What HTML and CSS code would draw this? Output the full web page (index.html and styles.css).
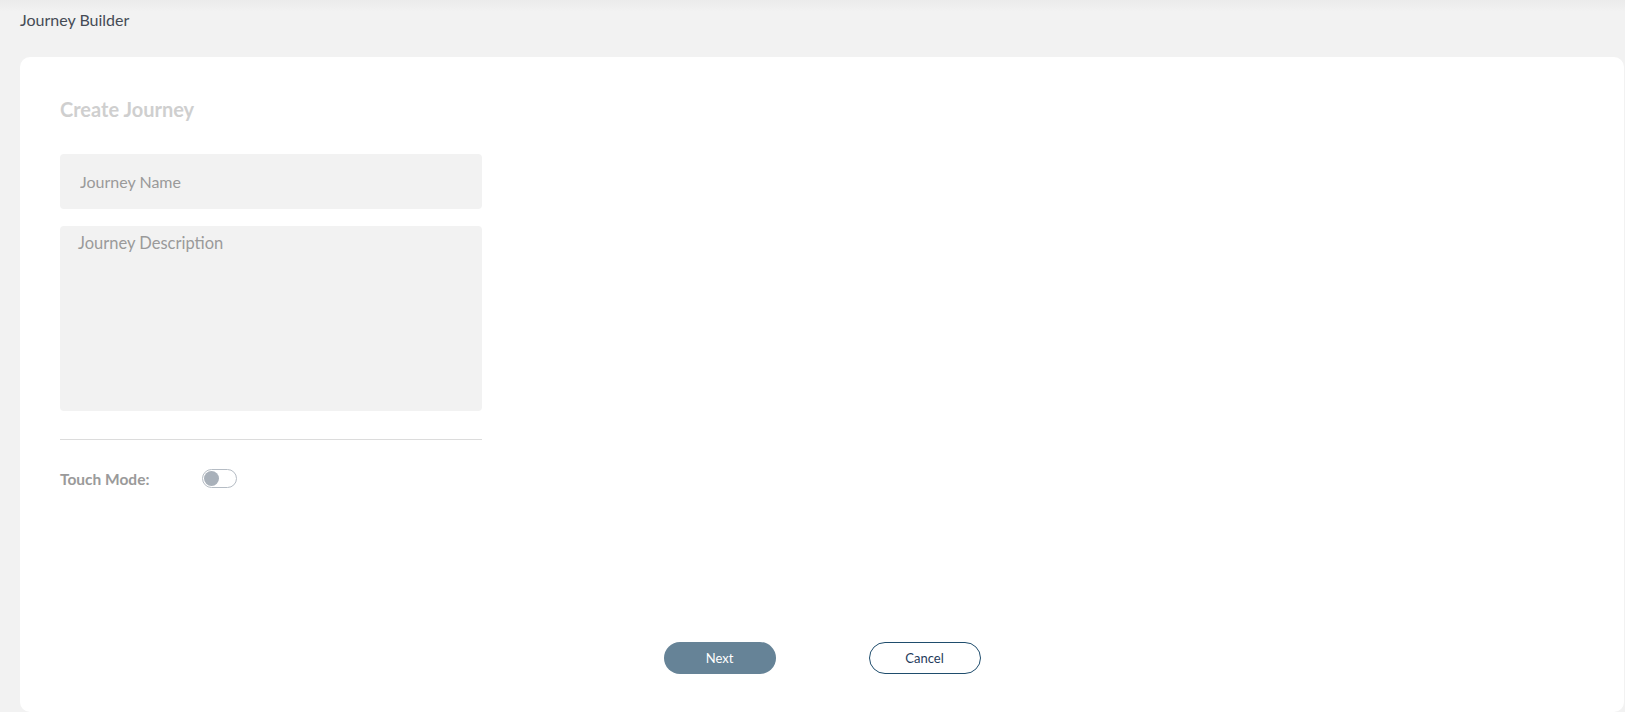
FILE: index.html
```html
<!DOCTYPE html>
<html lang="en">
<head>
  <meta charset="UTF-8" />
  <meta name="viewport" content="width=device-width, initial-scale=1.0"/>
  <title>Journey Builder</title>
  <link rel="stylesheet" href="styles.css">
</head>
<body>

  <header class="top-bar">
    <span class="page-title">Journey Builder</span>
  </header>

  <main class="card">
    <h2 class="card-title">Create Journey</h2>

    <form class="journey-form" onsubmit="event.preventDefault()">
      <input type="text" class="field" placeholder="Journey Name" />
      <textarea class="field field-area" placeholder="Journey Description"></textarea>

      <hr class="divider" />

      <div class="touch-row">
        <label class="touch-label" for="touch-mode">Touch Mode:</label>
        <label class="switch">
          <input type="checkbox" id="touch-mode" />
          <span class="knob"></span>
        </label>
      </div>
    </form>

    <div class="actions">
      <button type="button" class="btn btn-next">Next</button>
      <button type="button" class="btn btn-cancel">Cancel</button>
    </div>
  </main>

</body>
</html>
```

FILE: styles.css
```css
html, body {
  height: 100%;
}

body {
  font-family: Lato, "Open Sans", Arial, sans-serif;
  margin: 0;
  padding: 0;
  background: linear-gradient(to bottom, #ebebeb 0, #f2f2f2 12px, #f2f2f2 100%);
  display: flex;
  flex-direction: column;
  overflow: hidden;
}

.top-bar {
  height: 57px;
  box-sizing: border-box;
  padding: 10px 20px 0;
}

.page-title {
  font-size: 16px;
  font-weight: normal;
  color: #454b55;
}

.card {
  flex: 1;
  margin: 0 1px 0 20px;
  background: #fff;
  border-radius: 10px;
  padding: 39px 40px 0;
  display: flex;
  flex-direction: column;
}

.card-title {
  margin: 0 0 32px;
  font-size: 20px;
  font-weight: bold;
  color: #cfcfcf;
  line-height: 26px;
}

.journey-form {
  width: 422px;
  display: flex;
  flex-direction: column;
}

.field {
  font-family: inherit;
  font-size: 16px;
  color: #555;
  background: #f2f2f2;
  border: none;
  border-radius: 4px;
  box-sizing: border-box;
  width: 100%;
  height: 55px;
  padding: 0 20px;
  margin: 0 0 17px;
  outline: none;
}

.field::placeholder {
  color: #9a9a9a;
}

.field-area {
  height: 185px;
  font-size: 16.5px;
  padding: 7px 18px;
  resize: none;
  margin-bottom: 28px;
}

.divider {
  border: none;
  border-top: 1px solid #dcdcdc;
  margin: 0 0 29px;
  width: 100%;
}

.touch-row {
  display: flex;
  align-items: center;
}

.touch-label {
  width: 142px;
  font-size: 15.5px;
  font-weight: bold;
  color: #9a9a9a;
}

.switch {
  position: relative;
  width: 35px;
  height: 19px;
  cursor: pointer;
}

.switch input {
  display: none;
}

.knob {
  position: absolute;
  inset: 0;
  border: 1px solid #b5bcc4;
  border-radius: 10px;
  background: #fff;
}

.knob::before {
  content: "";
  position: absolute;
  left: 1px;
  top: 1px;
  width: 15px;
  height: 15px;
  border-radius: 50%;
  background: #a9b1ba;
}

.actions {
  margin-top: auto;
  margin-bottom: 38px;
  display: flex;
  justify-content: center;
  gap: 93px;
}

.btn {
  font-family: inherit;
  font-size: 13px;
  width: 112px;
  height: 32px;
  border-radius: 16px;
  cursor: pointer;
}

.btn-next {
  background: #668397;
  color: #fff;
  border: none;
}

.btn-cancel {
  background: #fff;
  color: #1f3b5c;
  border: 1px solid #1f4d6d;
}
```
